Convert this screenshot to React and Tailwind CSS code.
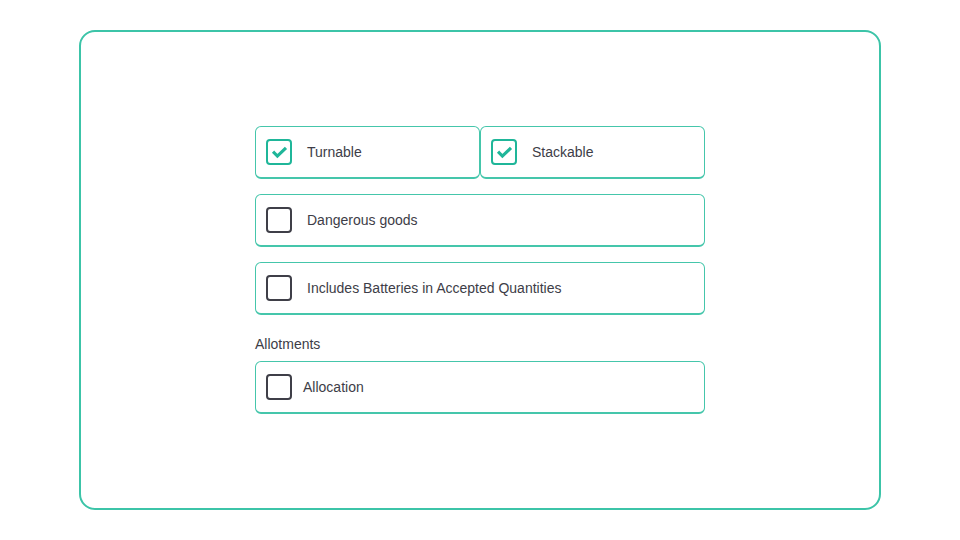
import React from "react";

const Check = () => (
  <svg viewBox="0 0 24 24" className="w-[17px] h-[17px]" fill="none" stroke="#1fb699" strokeWidth={4.5} strokeLinecap="square">
    <path d="M4.5 12.5l4.5 4.5L19.5 7" />
  </svg>
);

const Box = ({ checked }) => (
  <div
    className={
      checked
        ? "w-[26px] h-[26px] shrink-0 rounded-[4px] border-2 border-[#1fb699] flex items-center justify-center"
        : "w-[26px] h-[26px] shrink-0 rounded-[4px] border-2 border-[#3f3f48]"
    }
  >
    {checked && <Check />}
  </div>
);

const Option = ({ label, checked, gap = "gap-[15px]", className = "" }) => (
  <div
    className={`h-[53px] flex items-center ${gap} px-[10px] rounded-[6px] border border-[#45c6ab] border-b-2 bg-white ${className}`}
  >
    <Box checked={checked} />
    <span className="text-[14px] text-[#3d3d47]">{label}</span>
  </div>
);

export default function App() {
  return (
    <div className="w-[960px] h-[540px] bg-white pt-[30px] pl-[79px] font-['Liberation_Sans',Arial,sans-serif]">
      <div className="w-[802px] h-[480px] rounded-[16px] border-2 border-[#3cc4a8] flex justify-center pt-[94px]">
        <div className="w-[450px] flex flex-col">
          <div className="flex">
            <Option label="Turnable" checked className="w-[225px]" />
            <Option label="Stackable" checked className="w-[225px]" />
          </div>
          <Option label="Dangerous goods" className="mt-[15px]" />
          <Option label="Includes Batteries in Accepted Quantities" className="mt-[15px]" />
          <div className="pt-[19px] pb-[7px] text-[14px] leading-5 text-[#3d3d47]">Allotments</div>
          <Option label="Allocation" gap="gap-[11px]" />
        </div>
      </div>
    </div>
  );
}
